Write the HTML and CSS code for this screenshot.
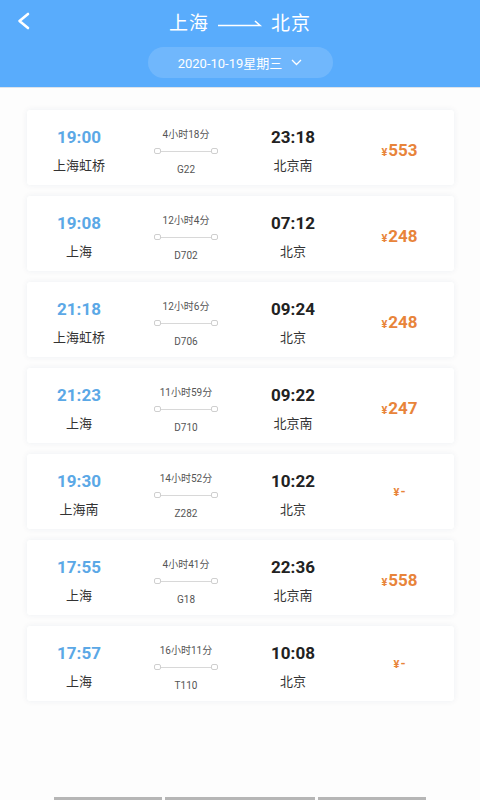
FILE: index.html
```html
<!DOCTYPE html>
<html>
  <head>
    <meta charset="utf-8">
    <link rel="stylesheet" href="styles.css">
  </head>
  <body>
    <main class="page">
      <header class="topbar">
        <div class="titlerow">
          <span class="back">
            <svg width="15" height="18" viewBox="0 0 15 18"><path d="M12 2 L3.5 9 L12 16" fill="none" stroke="#fff" stroke-width="2.6" stroke-linecap="round" stroke-linejoin="round"/></svg>
          </span>
          <h1 class="route">
            <span>上海</span>
            <svg class="route-arrow" width="46" height="10" viewBox="0 0 46 10"><path d="M1 8.5 H43 L38 4" fill="none" stroke="#fff" stroke-width="1.6"/></svg>
            <span>北京</span>
          </h1>
        </div>
        <div class="datepick">
          <span>2020-10-19星期三</span>
          <svg width="11" height="7" viewBox="0 0 11 7"><path d="M1 1 L5.5 5.5 L10 1" fill="none" stroke="#fff" stroke-width="1.3"/></svg>
        </div>
      </header>

      <section class="list">
        <div class="card">
          <div class="col dep"><div class="time">19:00</div><div class="station">上海虹桥</div></div>
          <div class="col mid"><div class="dur">4小时18分</div><div class="track"><i></i><b></b><i></i></div><div class="no">G22</div></div>
          <div class="col arr"><div class="time">23:18</div><div class="station">北京南</div></div>
          <div class="col price"><small>¥</small>553</div>
        </div>
        <div class="card">
          <div class="col dep"><div class="time">19:08</div><div class="station">上海</div></div>
          <div class="col mid"><div class="dur">12小时4分</div><div class="track"><i></i><b></b><i></i></div><div class="no">D702</div></div>
          <div class="col arr"><div class="time">07:12</div><div class="station">北京</div></div>
          <div class="col price"><small>¥</small>248</div>
        </div>
        <div class="card">
          <div class="col dep"><div class="time">21:18</div><div class="station">上海虹桥</div></div>
          <div class="col mid"><div class="dur">12小时6分</div><div class="track"><i></i><b></b><i></i></div><div class="no">D706</div></div>
          <div class="col arr"><div class="time">09:24</div><div class="station">北京</div></div>
          <div class="col price"><small>¥</small>248</div>
        </div>
        <div class="card">
          <div class="col dep"><div class="time">21:23</div><div class="station">上海</div></div>
          <div class="col mid"><div class="dur">11小时59分</div><div class="track"><i></i><b></b><i></i></div><div class="no">D710</div></div>
          <div class="col arr"><div class="time">09:22</div><div class="station">北京南</div></div>
          <div class="col price"><small>¥</small>247</div>
        </div>
        <div class="card">
          <div class="col dep"><div class="time">19:30</div><div class="station">上海南</div></div>
          <div class="col mid"><div class="dur">14小时52分</div><div class="track"><i></i><b></b><i></i></div><div class="no">Z282</div></div>
          <div class="col arr"><div class="time">10:22</div><div class="station">北京</div></div>
          <div class="col price none"><small>¥</small>-</div>
        </div>
        <div class="card">
          <div class="col dep"><div class="time">17:55</div><div class="station">上海</div></div>
          <div class="col mid"><div class="dur">4小时41分</div><div class="track"><i></i><b></b><i></i></div><div class="no">G18</div></div>
          <div class="col arr"><div class="time">22:36</div><div class="station">北京南</div></div>
          <div class="col price"><small>¥</small>558</div>
        </div>
        <div class="card">
          <div class="col dep"><div class="time">17:57</div><div class="station">上海</div></div>
          <div class="col mid"><div class="dur">16小时11分</div><div class="track"><i></i><b></b><i></i></div><div class="no">T110</div></div>
          <div class="col arr"><div class="time">10:08</div><div class="station">北京</div></div>
          <div class="col price none"><small>¥</small>-</div>
        </div>
      </section>

      <footer class="bottom">
        <span class="seg one"></span>
        <span class="seg two"></span>
        <span class="seg three"></span>
      </footer>
    </main>
  </body>
</html>
```

FILE: styles.css
```css
body {
  margin: 0;
  background-color: #fdfdfd;
  font-family: Roboto, "Noto Sans CJK SC", sans-serif;
}

.page {
  display: flex;
  flex-direction: column;
  min-height: 800px;
}

.topbar {
  background-color: #59acfc;
  height: 87px;
  border-bottom: 1px solid #dde3ea;
  display: flex;
  flex-direction: column;
  align-items: center;
}

.titlerow {
  width: 100%;
  height: 42px;
  display: flex;
  align-items: center;
  justify-content: center;
  position: relative;
}

.back {
  position: absolute;
  left: 16px;
  top: 12px;
}

.route {
  margin: 0;
  display: flex;
  align-items: center;
  gap: 8px;
  color: #fff;
  font-size: 19px;
  font-weight: normal;
  letter-spacing: 1px;
}

.route-arrow {
  margin-top: 2px;
}

.datepick {
  margin-top: 5px;
  width: 185px;
  height: 31px;
  border-radius: 16px;
  background-color: rgba(255, 255, 255, 0.14);
  display: flex;
  align-items: center;
  justify-content: center;
  gap: 9px;
  color: #fff;
  font-size: 13px;
}

.list {
  padding: 22px 26px 0 27px;
  display: flex;
  flex-direction: column;
  gap: 11px;
}

.card {
  height: 75px;
  background-color: #fff;
  border-radius: 3px;
  box-shadow: 0 0 6px rgba(30, 60, 100, 0.07);
  display: flex;
}

.col {
  display: flex;
  flex-direction: column;
  align-items: center;
}

.dep, .arr {
  width: 104px;
  padding-top: 17px;
}

.mid {
  width: 110px;
  padding-top: 18px;
}

.time {
  font-size: 17px;
  font-weight: bold;
  line-height: 20px;
  color: #222;
}

.dep .time {
  color: #5ba8e6;
}

.station {
  margin-top: 11px;
  font-size: 13px;
  line-height: 16px;
  color: #333;
}

.dur, .no {
  font-size: 10px;
  line-height: 14px;
  color: #555;
}

.track {
  margin: 6px 0 9px;
  width: 64px;
  height: 6px;
  display: flex;
  align-items: center;
}

.track i {
  width: 5px;
  height: 4px;
  border: 1px solid #cfcfcf;
  border-radius: 2px;
}

.track b {
  flex: 1;
  height: 1px;
  background-color: #d8d8d8;
}

.price {
  flex: 1;
  flex-direction: row;
  justify-content: center;
  align-items: baseline;
  padding-top: 30px;
  font-size: 17px;
  font-weight: bold;
  color: #e8843a;
}

.price small {
  font-size: 11px;
  margin-right: 1px;
}

.price.none {
  font-size: 13px;
}

.bottom {
  margin-top: auto;
  display: flex;
  justify-content: center;
  gap: 3px;
  height: 3px;
}

.seg {
  background-color: #b6b6b6;
  height: 3px;
}

.one, .three {
  width: 108px;
}

.two {
  width: 150px;
}
```
